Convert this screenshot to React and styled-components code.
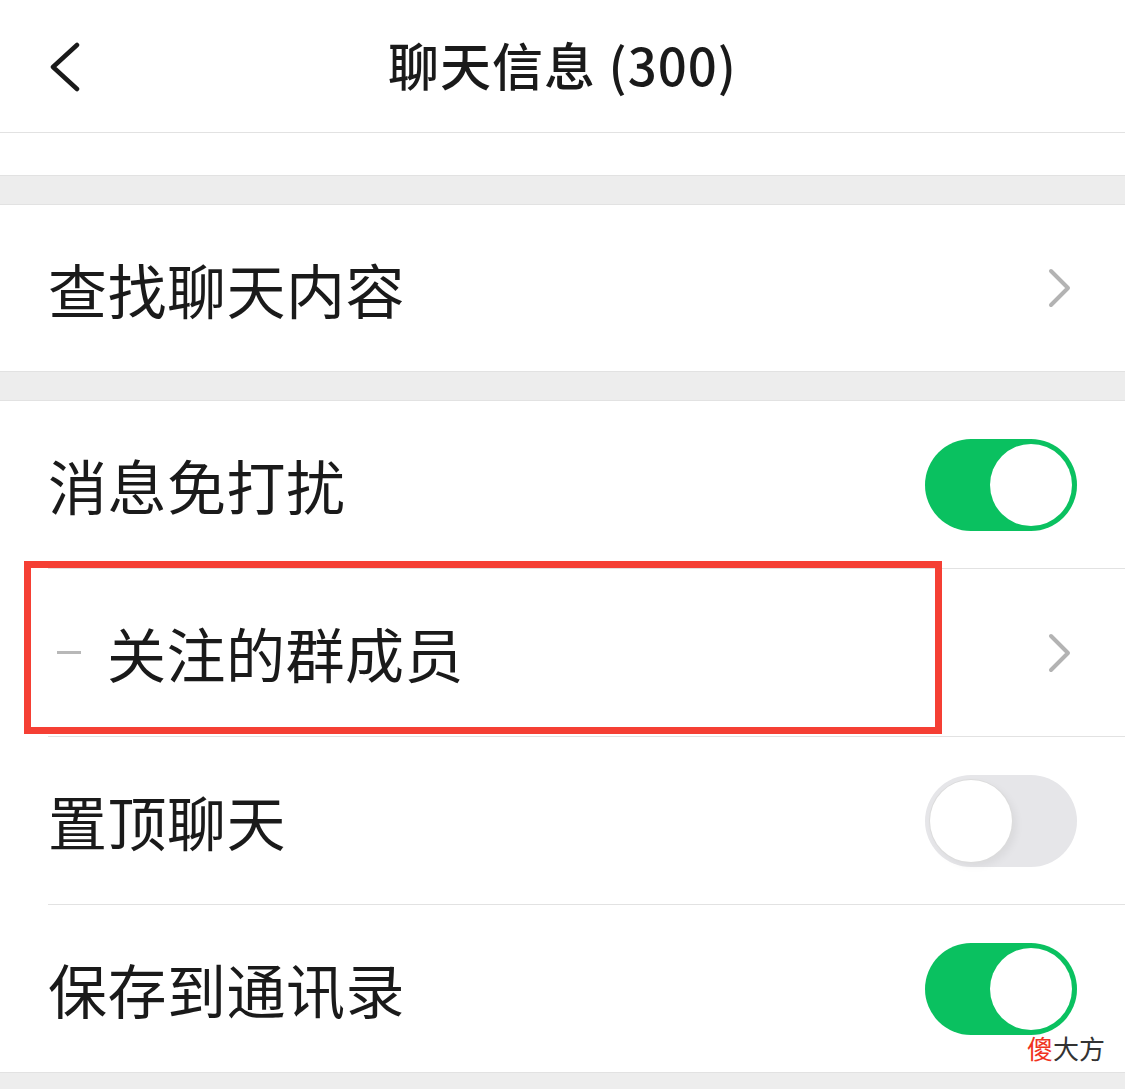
import React from 'react'
import styled, { createGlobalStyle } from 'styled-components'

const GlobalStyle = createGlobalStyle`
body{
margin: 0;
background: #ededed;
font-family: "Noto Sans CJK SC", "Noto Sans", sans-serif;
color: #1a1a1a;
}
`

const App = () => {
  return (
    <Page>
      <GlobalStyle />

      <Header>
        <BackButton>
          <svg width="34" height="50" viewBox="0 0 34 50">
            <polyline points="29,3 5,25 29,47" fill="none" stroke="#1a1a1a" strokeWidth="4.5" strokeLinecap="round" strokeLinejoin="round" />
          </svg>
        </BackButton>
        <Title>聊天信息 (300)</Title>
        <span />
      </Header>

      <Spacer />
      <GrayGap />

      <Group>
        <Row $first>
          <Label>查找聊天内容</Label>
          <Chevron />
        </Row>
      </Group>

      <GrayGap />

      <Group>
        <Row $divider>
          <Label>消息免打扰</Label>
          <Toggle $on />
        </Row>
        <Row $divider>
          <Dash />
          <Label>关注的群成员</Label>
          <Chevron />
          <Highlight />
        </Row>
        <Row $divider>
          <Label>置顶聊天</Label>
          <Toggle />
        </Row>
        <Row>
          <Label>保存到通讯录</Label>
          <Toggle $on />
          <Watermark><Red>傻</Red>大方</Watermark>
        </Row>
      </Group>

      <GrayGap />
    </Page>
  )
}

const Chevron = () => (
  <ChevronIcon width="26" height="40" viewBox="0 0 26 40">
    <polyline points="4,3 21,20 4,37" fill="none" stroke="#b3b3b3" strokeWidth="4" strokeLinecap="round" strokeLinejoin="round" />
  </ChevronIcon>
)

const Toggle = ({ $on }) => (
  <Track $on={$on}>
    <Knob $on={$on} />
  </Track>
)

const Page = styled.div`
width: 1125px;
min-height: 1089px;
background: #ededed;
`
const Header = styled.header`
display: grid;
grid-template-columns: 1fr auto 1fr;
align-items: center;
height: 132px;
padding: 0 0 0 48px;
background: #ffffff;
border-bottom: 1px solid #e2e2e2;
`
const BackButton = styled.div`
display: flex;
align-items: center;
padding-top: 2px;
`
const Title = styled.h1`
margin: 0 0 4px;
font-size: 51px;
font-weight: 500;
letter-spacing: 1px;
color: #1a1a1a;
padding-right: 48px;
`
const Spacer = styled.div`
height: 42px;
background: #ffffff;
border-bottom: 1px solid #e2e2e2;
`
const GrayGap = styled.div`
height: 28px;
background: #ededed;
border-bottom: 1px solid #e2e2e2;
`
const Group = styled.section`
background: #ffffff;
border-bottom: 1px solid #e2e2e2;
`
const Row = styled.div`
position: relative;
display: flex;
align-items: center;
height: ${p => (p.$first ? '166px' : '167px')};
margin-left: 48px;
padding-right: 48px;
border-bottom: ${p => (p.$divider ? '1px solid #e2e2e2' : 'none')};
`
const Label = styled.span`
flex: 1;
font-size: 59px;
font-weight: 400;
line-height: 1;
letter-spacing: 0.5px;
color: #1a1a1a;
`
const ChevronIcon = styled.svg`
margin-right: 4px;
`
const Dash = styled.span`
width: 24px;
height: 3px;
margin: 0 26px 0 9px;
background: #b8b8b8;
`
const Track = styled.div`
position: relative;
width: 152px;
height: 92px;
border-radius: 46px;
background: ${p => (p.$on ? '#0ac160' : '#e6e6e9')};
box-sizing: border-box;
`
const Knob = styled.div`
position: absolute;
top: 5px;
left: ${p => (p.$on ? '65px' : '5px')};
width: 82px;
height: 82px;
border-radius: 50%;
background: #ffffff;
box-shadow: ${p => (p.$on ? 'none' : '0 0 0 1px #dcdcdc, 4px 4px 8px rgba(0,0,0,0.06)')};
`
const Highlight = styled.div`
position: absolute;
top: -8px;
left: -24px;
width: 918px;
height: 173px;
border: 7px solid #f53f34;
box-sizing: border-box;
pointer-events: none;
`
const Watermark = styled.span`
position: absolute;
right: 20px;
bottom: 6px;
font-size: 26px;
color: #333333;
`
const Red = styled.span`
color: #f0341f;
`

export default App
